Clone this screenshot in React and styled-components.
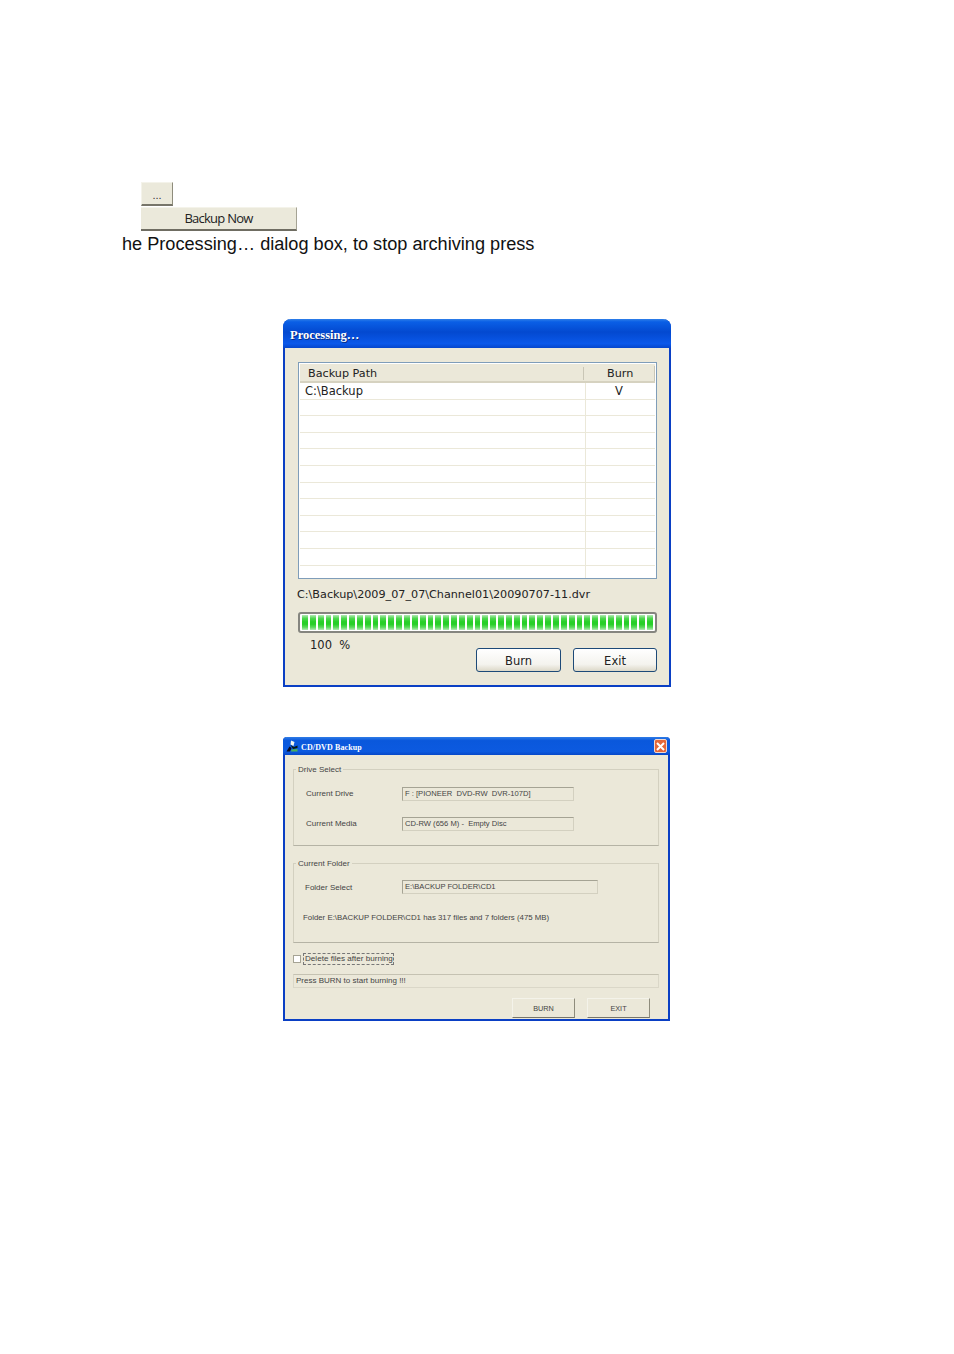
import React from "react";
import styled, { createGlobalStyle } from "styled-components";

const GlobalStyle = createGlobalStyle`
  html, body {
    margin: 0;
    padding: 0;
    background: #fff;
  }
  body {
    font-family: "Liberation Sans", Arial, sans-serif;
    color: #000;
  }
`;

const rows = [["C:\\Backup", "V"], ...Array.from({ length: 11 }, () => ["", ""])];

const App = () => {
  return (
    <Page>
      <GlobalStyle />
      <TopButtons>
        <SmallButton>...</SmallButton>
        <WideButton>Backup Now</WideButton>
      </TopButtons>
      <Sentence>he Processing… dialog box, to stop archiving press</Sentence>

      <ProcessingDialog>
        <BlueTitle>Processing…</BlueTitle>
        <ProcessingBody>
          <ListBox>
            <ListHead>
              <HeadPath>Backup Path</HeadPath>
              <HeadBurn>Burn</HeadBurn>
            </ListHead>
            {rows.map((row, i) => (
              <ListRow key={i} last={i === rows.length - 1}>
                <PathCell>{row[0]}</PathCell>
                <BurnCell>{row[1]}</BurnCell>
              </ListRow>
            ))}
          </ListBox>
          <FilePath>C:\Backup\2009_07_07\Channel01\20090707-11.dvr</FilePath>
          <ProgressTrack>
            {Array.from({ length: 45 }, (_, i) => (
              <ProgressBlock key={i} />
            ))}
          </ProgressTrack>
          <ProcessingFooter>
            <Percent>100&nbsp;&nbsp;%</Percent>
            <XpButton>Burn</XpButton>
            <XpButton>Exit</XpButton>
          </ProcessingFooter>
        </ProcessingBody>
      </ProcessingDialog>

      <BackupDialog>
        <SmallTitle>
          <DiscIcon viewBox="0 0 12 12">
            <path d="M0.5 11.5 L3.5 6.5 L5.5 8 L4 11.5 Z" fill="#0a0a1e" />
            <path d="M5 0.5 L8.5 2 L7.5 6 L4.5 4.5 Z" fill="#f0f4ee" />
            <path d="M4.5 5 L8 7 L11.5 5.5 L11.5 8 L7 9 Z" fill="#0a1a10" />
            <path d="M5.5 9.5 L11.5 9 L11.5 11.5 L5 11.5 Z" fill="#49b05a" />
          </DiscIcon>
          <SmallTitleText>CD/DVD Backup</SmallTitleText>
          <CloseButton>
            <svg viewBox="0 0 11 11" width="11" height="11">
              <path d="M2 2 L9 9 M9 2 L2 9" stroke="#fff" strokeWidth="2" />
            </svg>
          </CloseButton>
        </SmallTitle>
        <BackupBody>
          <Group height={77}>
            <Legend>Drive Select</Legend>
            <FieldRow top={17}>
              <FieldLabel>Current Drive</FieldLabel>
              <FieldValue width={172}>F : [PIONEER&nbsp; DVD-RW&nbsp; DVR-107D]</FieldValue>
            </FieldRow>
            <FieldRow top={17}>
              <FieldLabel>Current Media</FieldLabel>
              <FieldValue width={172}>CD-RW (656 M) -&nbsp; Empty Disc</FieldValue>
            </FieldRow>
          </Group>
          <Group height={80} spaced>
            <Legend>Current Folder</Legend>
            <FieldRow top={16}>
              <FolderLabel>Folder Select</FolderLabel>
              <FieldValue width={196}>E:\BACKUP FOLDER\CD1</FieldValue>
            </FieldRow>
            <FolderInfo>Folder E:\BACKUP FOLDER\CD1 has 317 files and 7 folders (475 MB)</FolderInfo>
          </Group>
          <CheckRow>
            <CheckBox />
            <CheckLabel>Delete files after burning</CheckLabel>
          </CheckRow>
          <StatusBar>Press BURN to start burning !!!</StatusBar>
          <BackupFooter>
            <FlatButton>BURN</FlatButton>
            <FlatButton>EXIT</FlatButton>
          </BackupFooter>
        </BackupBody>
      </BackupDialog>
    </Page>
  );
};

export default App;

const Page = styled.div`
  width: 954px;
  height: 1354px;
  padding-top: 182px;
  box-sizing: border-box;
  overflow: hidden;
`;

const TopButtons = styled.div`
  display: flex;
  flex-direction: column;
  align-items: flex-start;
  gap: 1px;
  margin-left: 141px;
`;

const SmallButton = styled.div`
  width: 32px;
  height: 24px;
  box-sizing: border-box;
  background: #ebe9db;
  border-top: 1px solid #f4f3ea;
  border-left: 1px solid #f4f3ea;
  border-right: 1px solid #8e8c7c;
  border-bottom: 2px solid #77756a;
  font: 11px "Liberation Sans", sans-serif;
  text-align: center;
  line-height: 24px;
  color: #333;
`;

const WideButton = styled.div`
  width: 156px;
  height: 24px;
  box-sizing: border-box;
  background: #ebe9db;
  border-top: 1px solid #f4f3ea;
  border-bottom: 2px solid #6f6d62;
  border-right: 1px solid #a5a394;
  font: 13px "Open Sans", sans-serif;
  letter-spacing: -0.75px;
  text-align: center;
  line-height: 21px;
  color: #222;
`;

const Sentence = styled.div`
  margin: 2px 0 0 122px;
  font-size: 18.15px;
  line-height: 23px;
  color: #111;
`;

const ProcessingDialog = styled.div`
  width: 388px;
  height: 368px;
  margin: 63px 0 0 283px;
  box-sizing: border-box;
  border: 2px solid #0a3fc4;
  border-top: none;
  border-radius: 8px 8px 0 0;
  background: #ebe8d9;
  display: flex;
  flex-direction: column;
`;

const BlueTitle = styled.div`
  height: 29px;
  margin: 0 -2px;
  padding-left: 7px;
  border-radius: 8px 8px 0 0;
  background: linear-gradient(180deg, #2f7fe8 0%, #0a5fe6 10%, #0349d0 45%, #0a58ea 85%, #0546cc 100%);
  color: #fff;
  font: bold 12.5px/33px "Liberation Serif", serif;
  text-shadow: 1px 1px 0 #0a2a80;
`;

const ProcessingBody = styled.div`
  padding: 14px 12px 0 13px;
  display: flex;
  flex-direction: column;
`;

const ListBox = styled.div`
  width: 359px;
  height: 217px;
  box-sizing: border-box;
  background: #fff;
  border: 1px solid #7f9db9;
  padding: 1px;
`;

const ListHead = styled.div`
  height: 17px;
  display: flex;
  background: #ebe8d9;
  border-bottom: 2px solid #d6d2c0;
  font: 11.2px/20px "DejaVu Sans", sans-serif;
  color: #222;
`;

const HeadPath = styled.div`
  width: 285px;
  padding-left: 8px;
  box-sizing: border-box;
  position: relative;
  &::after {
    content: "";
    position: absolute;
    right: 1px;
    top: 3px;
    height: 13px;
    border-right: 1px solid #c9c6b6;
  }
`;

const HeadBurn = styled.div`
  width: 70px;
  padding-left: 22px;
  box-sizing: border-box;
  border-right: 1px solid #c9c6b6;
  height: 15px;
  margin-top: 2px;
  line-height: 16px;
`;

const ListRow = styled.div`
  height: ${(props) => (props.last ? "12px" : "16.6px")};
  box-sizing: border-box;
  display: flex;
  border-bottom: ${(props) => (props.last ? "none" : "1px solid #ebe8d9")};
  font: 11.5px/17px "DejaVu Sans", sans-serif;
  color: #222;
`;

const PathCell = styled.div`
  width: 286px;
  padding-left: 5px;
  box-sizing: border-box;
  border-right: 1px solid #ebe8d9;
`;

const BurnCell = styled.div`
  flex: 1;
  padding-right: 3px;
  text-align: center;
`;

const FilePath = styled.div`
  margin: 8px 0 0 -1px;
  font: 11.2px/16px "DejaVu Sans", sans-serif;
  color: #222;
  white-space: nowrap;
`;

const ProgressTrack = styled.div`
  width: 359px;
  height: 21px;
  margin-top: 9px;
  box-sizing: border-box;
  border: 2px solid #85857f;
  border-radius: 3px;
  background: #fff;
  padding: 1px 2px;
  display: flex;
  gap: 2px;
  overflow: hidden;
`;

const ProgressBlock = styled.div`
  flex: 1;
  background: linear-gradient(180deg, #b4e8b6 0%, #4fd850 22%, #27cf28 45%, #27cf28 62%, #5bdb5c 82%, #b4e8b6 100%);
`;

const ProcessingFooter = styled.div`
  display: flex;
  align-items: flex-start;
  margin-top: 4px;
`;

const Percent = styled.div`
  width: 178px;
  padding-left: 12px;
  box-sizing: border-box;
  font: 11.5px/17px "DejaVu Sans", sans-serif;
  color: #222;
`;

const XpButton = styled.div`
  width: 85px;
  height: 24px;
  margin: 11px 12px 0 0;
  box-sizing: border-box;
  border: 1px solid #1d4a78;
  border-radius: 3px;
  background: linear-gradient(180deg, #ffffff 0%, #f4f3ee 70%, #dcd8c8 100%);
  font: 11.5px/24px "DejaVu Sans", sans-serif;
  text-align: center;
  color: #222;
  &:last-child {
    width: 84px;
    margin-right: 0;
  }
`;

const BackupDialog = styled.div`
  width: 387px;
  height: 284px;
  margin: 50px 0 0 283px;
  box-sizing: border-box;
  border: 2px solid #0a3fc4;
  border-top: none;
  border-radius: 4px 4px 0 0;
  background: #ebe8d9;
`;

const SmallTitle = styled.div`
  height: 18px;
  margin: 0 -2px;
  padding: 0 3px;
  display: flex;
  align-items: center;
  border-radius: 4px 4px 0 0;
  background: linear-gradient(180deg, #2f7ce6 0%, #0a58dc 20%, #0c5ae0 80%, #0748c8 100%);
`;

const DiscIcon = styled.svg`
  width: 12px;
  height: 12px;
  flex: none;
`;

const SmallTitleText = styled.div`
  flex: 1;
  margin-left: 3px;
  padding-top: 3px;
  color: #fff;
  font: bold 8px/15px "Liberation Serif", serif;
  letter-spacing: 0.12px;
`;

const CloseButton = styled.div`
  width: 13px;
  height: 14px;
  box-sizing: border-box;
  border: 1px solid #f0d8d0;
  border-radius: 2px;
  background: #e5683a;
  display: flex;
  align-items: center;
  justify-content: center;
`;

const BackupBody = styled.div`
  padding: 14px 9px 0 8px;
`;

const Group = styled.div`
  position: relative;
  height: ${(props) => props.height}px;
  margin-top: ${(props) => (props.spaced ? "17px" : "0")};
  box-sizing: border-box;
  border: 1px solid #d3d0c0;
  border-bottom-color: #b5b3a5;
  padding-left: 12px;
`;

const Legend = styled.div`
  position: absolute;
  top: -5px;
  left: 2px;
  padding: 0 2px;
  background: #ebe8d9;
  font: 8px/10px "Liberation Sans", sans-serif;
  color: #444;
`;

const FieldRow = styled.div`
  display: flex;
  align-items: center;
  height: 13px;
  margin-top: ${(props) => props.top}px;
`;

const FieldLabel = styled.div`
  width: 96px;
  font: 8px/13px "Liberation Sans", sans-serif;
  color: #444;
  white-space: nowrap;
`;

const FolderLabel = styled(FieldLabel)`
  margin-left: -1px;
  width: 97px;
  padding-top: 1px;
`;

const FieldValue = styled.div`
  width: ${(props) => props.width}px;
  height: 14px;
  box-sizing: border-box;
  padding-left: 2px;
  border: 1px solid #d3d0c0;
  border-top-color: #a5a394;
  border-left-color: #a5a394;
  font: 7.6px/12px "Liberation Sans", sans-serif;
  color: #444;
  white-space: nowrap;
`;

const FolderInfo = styled.div`
  margin: 18px 0 0 -3px;
  font: 7.85px/13px "Liberation Sans", sans-serif;
  color: #444;
  white-space: nowrap;
`;

const CheckRow = styled.div`
  display: flex;
  align-items: center;
  height: 12px;
  margin-top: 10px;
`;

const CheckBox = styled.div`
  width: 6px;
  height: 6px;
  background: #fff;
  border: 1px solid #a5a394;
  margin-right: 2px;
`;

const CheckLabel = styled.div`
  border: 1px dashed #777;
  padding: 0 0 0 1px;
  font: 8.1px/10px "Liberation Sans", sans-serif;
  color: #444;
  white-space: nowrap;
`;

const StatusBar = styled.div`
  height: 14px;
  margin-top: 9px;
  box-sizing: border-box;
  padding-left: 2px;
  border-top: 1px solid #c5c2b2;
  border-bottom: 1px solid #dad7c8;
  border-right: 1px solid #dad7c8;
  border-left: 1px solid #dad7c8;
  font: 8px/12px "Liberation Sans", sans-serif;
  color: #444;
`;

const BackupFooter = styled.div`
  display: flex;
  justify-content: flex-end;
  gap: 12px;
  margin-top: 10px;
  padding-right: 9px;
`;

const FlatButton = styled.div`
  width: 63px;
  height: 20px;
  box-sizing: border-box;
  border-right: 1px solid #8e8c7c;
  border-bottom: 1px solid #77756a;
  border-top: 1px solid #f4f3ea;
  border-left: 1px solid #f4f3ea;
  font: 7.3px/19px "Liberation Sans", sans-serif;
  text-align: center;
  color: #444;
`;
